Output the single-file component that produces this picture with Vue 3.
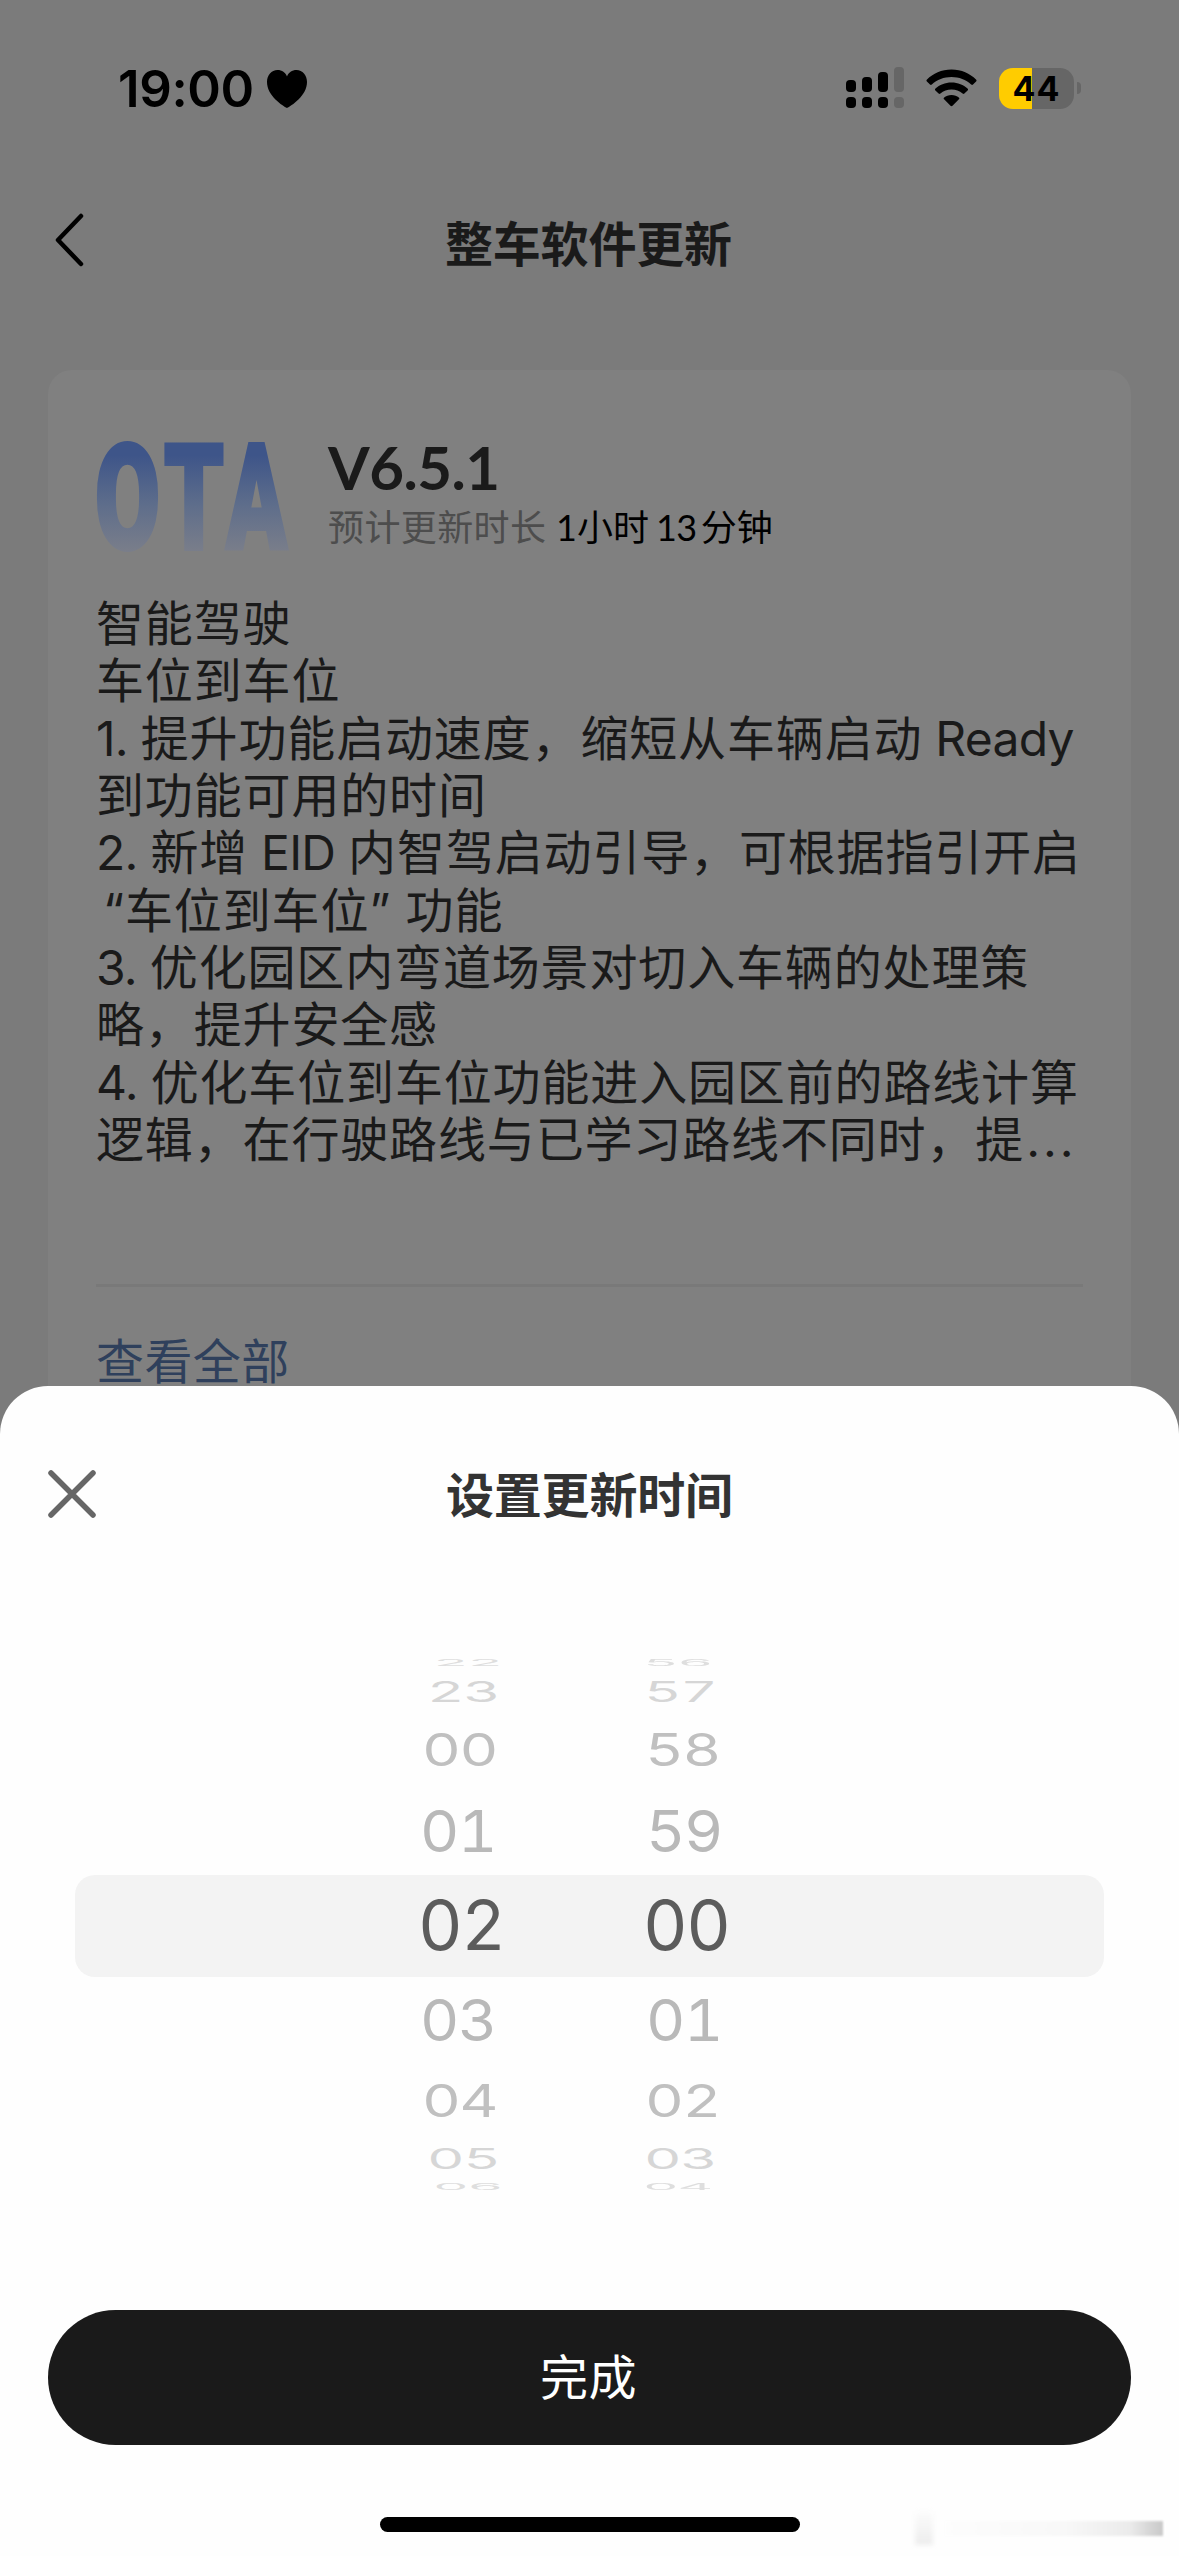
<script setup>
import { ref, computed } from "vue";

const notes = [
  "智能驾驶",
  "车位到车位",
  "1. 提升功能启动速度，缩短从车辆启动 Ready",
  "到功能可用的时间",
  "2. 新增 EID 内智驾启动引导，可根据指引开启",
  "“车位到车位” 功能",
  "3. 优化园区内弯道场景对切入车辆的处理策",
  "略，提升安全感",
  "4. 优化车位到车位功能进入园区前的路线计算",
  "逻辑，在行驶路线与已学习路线不同时，提...",
];

// latin runs are set tighter than the chinese text
function splitLine(line) {
  return line
    .split(/(“|\.{3}|[\dA-Za-z. ]+)/)
    .filter(Boolean)
    .map((text) => {
      let type = "han";
      if (text === "“") type = "quote";
      else if (text === "...") type = "dots";
      else if (/[\dA-Za-z]/.test(text)) type = "latin";
      return { text, type };
    });
}

const noteLines = notes.map(splitLine);

const hour = ref(2);
const minute = ref(0);

// rows of the wheel, by distance from the selected one
const rings = [
  { height: 102, sx: 1, sy: 1 },
  { height: 87, sx: 0.88, sy: 0.83 },
  { height: 75, sx: 0.87, sy: 0.65 },
  { height: 41, sx: 0.84, sy: 0.405 },
  { height: 16, sx: 0.8, sy: 0.12 },
];
const hourShift = [0, 2, 4, 9, 15];
const minuteShift = [0, 3, 2, 1, 0];

function buildRows(value, max, shifts) {
  const rows = [];
  for (let i = -4; i <= 4; i++) {
    const d = Math.abs(i);
    const ring = rings[d];
    rows.push({
      key: i,
      level: d,
      label: String((value + i + max) % max).padStart(2, "0"),
      rowStyle: { height: ring.height + "px" },
      numStyle: {
        transform: `translateX(${shifts[d]}px) scale(${ring.sx}, ${ring.sy})`,
      },
    });
  }
  return rows;
}

const columns = computed(() => [
  { name: "hour", rows: buildRows(hour.value, 24, hourShift) },
  { name: "minute", rows: buildRows(minute.value, 60, minuteShift) },
]);
</script>

<template>
  <div class="screen">
    <header class="status-bar">
      <div class="clock">
        <span class="time">19:00</span>
        <svg class="heart" width="42" height="40" viewBox="0 0 42 40">
          <path
            d="M21 39C17 37 1 27 1 13C1 6 5.500 1 11.500 1C16 1 19.500 3.500 21 7.500C22.500 3.500 26 1 30.500 1C36.500 1 41 6 41 13C41 27 25 37 21 39Z"
          />
        </svg>
      </div>
      <div class="indicators">
        <svg class="signal" width="58" height="42" viewBox="0 0 58 42">
          <rect x="0" y="13" width="10" height="12" rx="4" />
          <rect x="16" y="10" width="10" height="15" rx="4" />
          <rect x="32" y="5" width="10" height="20" rx="4" />
          <rect class="off" x="48" y="0" width="10" height="25" rx="4" />
          <rect x="0" y="30" width="10" height="11" rx="4" />
          <rect x="16" y="30" width="10" height="11" rx="4" />
          <rect x="32" y="30" width="10" height="11" rx="4" />
          <rect class="off" x="48" y="30" width="10" height="11" rx="4" />
        </svg>
        <svg class="wifi" width="51" height="38" viewBox="0 0 51 38">
          <path
            d="M25.500 0.500C35.500 0.500 44 4.500 50 10.500C50.700 11.200 50.700 11.800 50.100 12.400L47 15.500C46.400 16.100 45.800 16 45.200 15.500C40 10.700 33 8 25.500 8C18 8 11 10.700 5.800 15.500C5.200 16 4.600 16.100 4 15.500L0.900 12.400C0.300 11.800 0.300 11.200 1 10.500C7 4.500 15.500 0.500 25.500 0.500Z"
          />
          <path
            d="M25.500 13.500C32 13.500 37.500 16 41.500 19.500C42.200 20.100 42.200 20.800 41.600 21.400L38.400 24.600C37.800 25.200 37.200 25.100 36.600 24.600C33.500 22 29.800 20.600 25.500 20.600C21.200 20.600 17.500 22 14.400 24.600C13.800 25.100 13.200 25.200 12.600 24.600L9.400 21.400C8.800 20.800 8.800 20.100 9.500 19.500C13.500 16 19 13.500 25.500 13.500Z"
          />
          <path
            d="M25.500 26C28.500 26 31 27 32.800 28.400C33.500 29 33.500 29.700 32.900 30.300L26.500 36.800C25.900 37.400 25.100 37.400 24.500 36.800L18.100 30.300C17.500 29.700 17.500 29 18.200 28.400C20 27 22.500 26 25.500 26Z"
          />
        </svg>
        <div class="battery">44</div>
        <div class="battery-tip"></div>
      </div>
    </header>

    <nav class="nav-bar">
      <svg class="back" width="32" height="56" viewBox="0 0 32 56">
        <path d="M27 4L4 28L27 52" />
      </svg>
      <h1>整车软件更新</h1>
    </nav>

    <section class="card">
      <div class="card-head">
        <svg class="ota" width="194" height="114" viewBox="0 0 194 114">
          <defs>
            <linearGradient
              id="fade"
              gradientUnits="userSpaceOnUse"
              x1="0"
              y1="0"
              x2="0"
              y2="114"
            >
              <stop offset="0.15" stop-color="#3e5589" />
              <stop offset="0.6" stop-color="#5f6e8b" />
              <stop offset="1" stop-color="#7a7e8a" />
            </linearGradient>
          </defs>
          <g fill="url(#fade)" stroke="url(#fade)">
            <text x="-1" y="111" textLength="65" lengthAdjust="spacingAndGlyphs">O</text>
            <text x="68" y="111" textLength="60" lengthAdjust="spacingAndGlyphs">T</text>
            <text x="130" y="111" textLength="61" lengthAdjust="spacingAndGlyphs">A</text>
          </g>
        </svg>
        <div class="version">
          <div class="version-no">V6.5.1</div>
          <div class="duration">
            预计更新时长 <span class="value">1小时<i>13</i>分钟</span>
          </div>
        </div>
      </div>
      <div class="notes">
        <p v-for="(parts, i) in noteLines" :key="i">
          <span v-for="(part, j) in parts" :key="j" :class="part.type">{{
            part.text
          }}</span>
        </p>
      </div>
      <div class="more">查看全部</div>
    </section>

    <div class="sheet">
      <div class="sheet-head">
        <svg class="close" width="48" height="48" viewBox="0 0 48 48">
          <path d="M3 3L45 45M45 3L3 45" />
        </svg>
        <h2>设置更新时间</h2>
      </div>
      <div class="picker">
        <div class="band"></div>
        <div v-for="col in columns" :key="col.name" :class="['wheel', col.name]">
          <div
            v-for="row in col.rows"
            :key="row.key"
            :class="['row', 'level-' + row.level]"
            :style="row.rowStyle"
          >
            <span class="num" :style="row.numStyle">{{ row.label }}</span>
          </div>
        </div>
      </div>
      <button class="done">完成</button>
      <div class="home-bar"></div>
      <div class="smudge">
        <span class="smudge-block"></span>
        <span class="smudge-line"></span>
      </div>
    </div>
  </div>
</template>

<style>
body {
  background: #7b7b7b;
}
</style>

<style scoped>
.screen {
  position: relative;
  width: 1179px;
  height: 2556px;
  overflow: hidden;
  background: #7b7b7b;
  color: #1a1a1a;
  font-family: Inter, "Noto Sans CJK SC", sans-serif;
}

h1,
h2,
p {
  margin: 0;
}

.status-bar {
  display: flex;
  justify-content: space-between;
  height: 176px;
  padding: 0 98px 0 118px;
  box-sizing: border-box;
  color: #000;
}

.clock {
  display: flex;
  align-items: center;
  gap: 12px;
  height: 178px;
}

.time {
  font-size: 51px;
  font-weight: 600;
  line-height: 60px;
  letter-spacing: -0.4px;
}

.indicators {
  display: flex;
  align-items: center;
  height: 176px;
}

.signal {
  margin-right: 22px;
}

.off {
  fill: #666;
}

.wifi {
  margin-right: 22px;
}

.battery {
  width: 75px;
  height: 41px;
  border-radius: 14px;
  background: linear-gradient(90deg, #ffcc00 33px, #666 33px);
  font-size: 34px;
  font-weight: 650;
  line-height: 42px;
  letter-spacing: 1px;
  text-align: center;
}

.battery-tip {
  width: 4px;
  height: 12px;
  margin-left: 3px;
  border-radius: 0 4px 4px 0;
  background: #666;
}

.nav-bar {
  display: flex;
  align-items: center;
  height: 128px;
  padding-left: 54px;
}

.back path {
  fill: none;
  stroke: #000;
  stroke-width: 4.5;
  stroke-linecap: round;
  stroke-linejoin: round;
}

h1,
h2 {
  font-size: 48px;
  font-weight: 600;
  line-height: 72px;
  letter-spacing: -0.2px;
}

h1 {
  margin: 10px 0 0 359px;
}

.card {
  height: 1100px;
  margin: 66px 48px 0;
  padding: 68px 48px 0;
  border-radius: 24px;
  box-sizing: border-box;
  background: #808080;
}

.card-head {
  display: flex;
  gap: 38px;
  height: 120px;
}

.ota {
  overflow: visible;
}

.ota text {
  font-family: Roboto, sans-serif;
  font-size: 147px;
  font-weight: 900;
  stroke-width: 4px;
}

.version-no {
  height: 70px;
  font-family: Lato, sans-serif;
  font-size: 60px;
  font-weight: 700;
  line-height: 59px;
  letter-spacing: -0.5px;
}

.duration {
  color: #4d4d4d;
  font-family: Lato, "Noto Sans CJK SC", sans-serif;
  font-size: 36px;
  line-height: 38px;
  white-space: nowrap;
  letter-spacing: 0.4px;
}

.value {
  color: #000;
  letter-spacing: 0;
}

.value i {
  margin: 0 4px 0 7px;
  font-style: normal;
  letter-spacing: -0.5px;
}

.notes {
  height: 729px;
  padding-top: 37px;
  border-bottom: 3px solid #797979;
  box-sizing: border-box;
}

.notes p {
  height: 57.33px;
  font-size: 48px;
  line-height: 57.33px;
  letter-spacing: 0.85px;
  white-space: nowrap;
}

.notes span {
  white-space: pre;
}

.latin {
  letter-spacing: -0.7px;
}

.quote {
  margin-left: 7px;
}

.dots {
  margin-left: 2px;
  letter-spacing: 3px;
}

.more {
  padding-top: 42px;
  color: #2f405c;
  font-size: 48px;
  line-height: 66px;
  letter-spacing: 0.4px;
}

.sheet {
  position: absolute;
  top: 1386px;
  left: 0;
  width: 1179px;
  height: 1170px;
  border-radius: 48px 48px 0 0;
  background: #fefefe;
}

.sheet-head {
  display: flex;
  align-items: center;
  height: 216px;
  padding-left: 48px;
}

.close path {
  fill: none;
  stroke: #666;
  stroke-width: 5.5;
  stroke-linecap: round;
}

h2 {
  margin: 4px 0 0 350px;
  color: #333;
}

.picker {
  position: relative;
  display: flex;
  height: 648px;
  padding: 53px 0 0 418px;
  box-sizing: border-box;
}

.band {
  position: absolute;
  top: 273px;
  left: 75px;
  width: 1029px;
  height: 102px;
  border-radius: 20px;
  background: #f3f3f3;
}

.wheel {
  position: relative;
  width: 225px;
}

.row {
  display: flex;
  align-items: center;
}

.num {
  font-size: 69px;
  line-height: 0;
  letter-spacing: -1.5px;
  font-feature-settings: "tnum";
  transform-origin: left center;
}

.level-0 {
  color: #5c5c5c;
}

.level-1 {
  color: #b9b9b9;
}

.level-2 {
  color: #c0c0c0;
}

.level-3 {
  color: #d6d6d6;
}

.level-4 {
  color: #dedede;
}

.done {
  display: block;
  width: 1083px;
  height: 135px;
  margin: 60px 48px 0;
  padding: 0 2px 7px 0;
  border: none;
  border-radius: 68px;
  background: #1a1a1a;
  color: #fff;
  font-family: inherit;
  font-size: 48px;
  letter-spacing: 0.6px;
}

.home-bar {
  width: 420px;
  height: 15px;
  margin: 72px auto 0;
  border-radius: 8px;
  background: #000;
}

.smudge {
  position: absolute;
  right: 13px;
  bottom: 11px;
  display: flex;
  align-items: center;
  gap: 12px;
}

.smudge-block {
  width: 18px;
  height: 34px;
  background: linear-gradient(#fcfcfc, #ededed);
  filter: blur(2px);
}

.smudge-line {
  width: 218px;
  height: 15px;
  border-right: 3px solid #fff;
  background: linear-gradient(90deg, #fdfdfd, #f8f8f8 55%, #ebebeb 85%, #c8c8c8);
  filter: blur(1px);
}
</style>
